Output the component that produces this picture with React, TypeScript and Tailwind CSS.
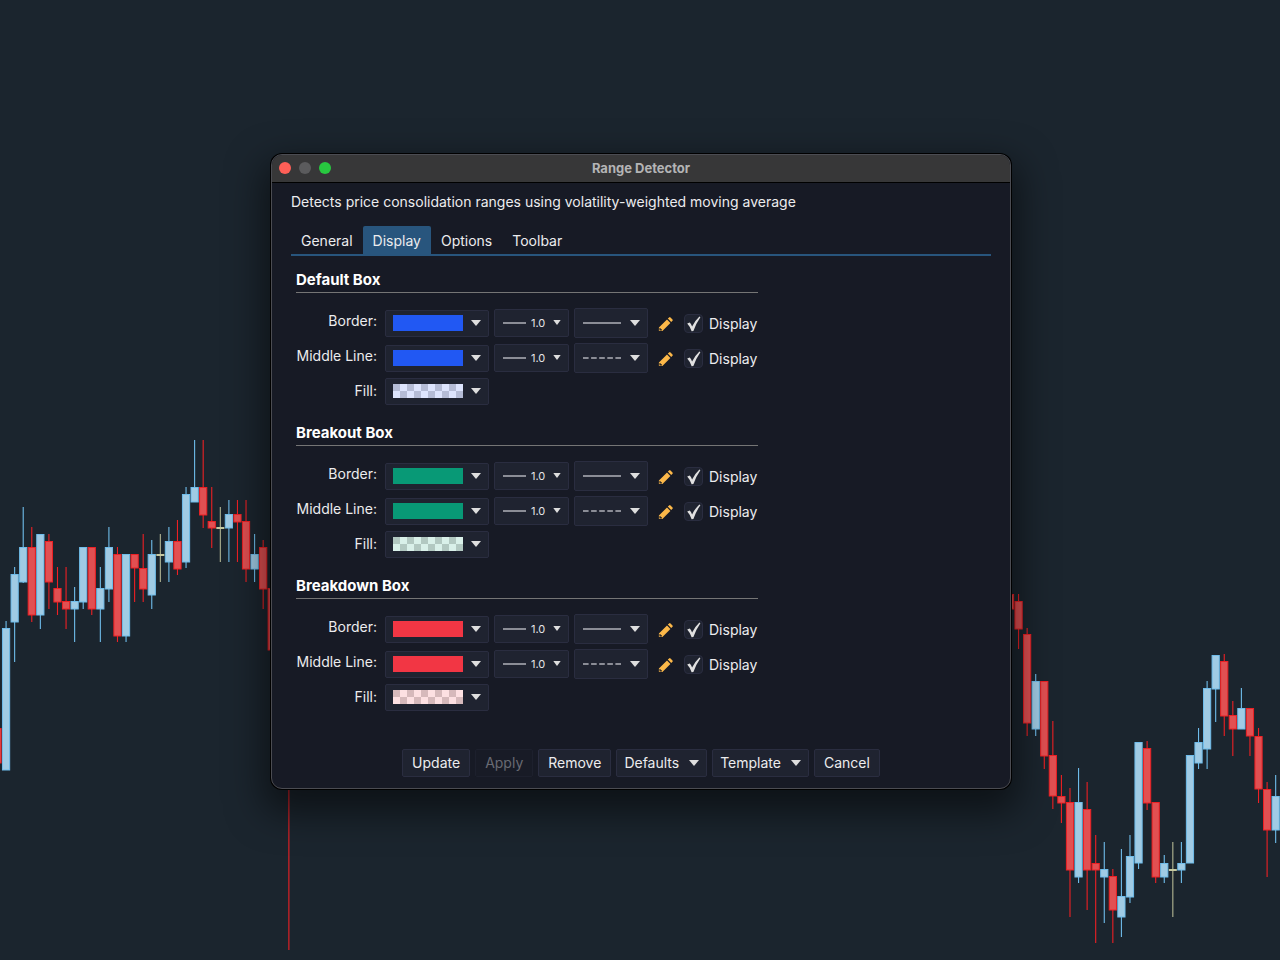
import { useId, useState, type ReactNode } from "react";

type Kind = "up" | "down" | "flat";
// [kind, high, body top, body bottom, low]
type Candle = [Kind, number, number, number, number];

const PITCH = 8.57;

const leftCandles: Candle[] = [
  ["down", 728, 728, 763, 763],
  ["up", 621, 628, 770, 770],
  ["up", 567, 574, 622, 662],
  ["up", 507, 547, 582, 583],
  ["down", 527, 547, 615, 622],
  ["up", 534, 534, 615, 629],
  ["down", 534, 541, 582, 609],
  ["down", 567, 588, 602, 615],
  ["down", 567, 601, 609, 629],
  ["up", 587, 601, 609, 642],
  ["up", 547, 547, 602, 609],
  ["down", 547, 547, 609, 615],
  ["up", 567, 588, 609, 642],
  ["up", 527, 547, 589, 602],
  ["down", 547, 554, 636, 642],
  ["up", 554, 554, 636, 642],
  ["down", 554, 554, 568, 602],
  ["down", 534, 568, 589, 602],
  ["up", 540, 554, 595, 609],
  ["flat", 534, 554, 556, 582],
  ["up", 527, 541, 562, 582],
  ["down", 520, 541, 569, 575],
  ["up", 487, 494, 562, 568],
  ["up", 440, 487, 502, 502],
  ["down", 440, 487, 515, 528],
  ["down", 487, 521, 528, 548],
  ["flat", 507, 527, 529, 562],
  ["up", 500, 514, 528, 562],
  ["down", 500, 514, 522, 562],
  ["down", 500, 521, 569, 582],
  ["up", 534, 554, 569, 582],
  ["down", 540, 547, 589, 609],
  ["down", 588, 588, 650, 650],
  ["down", 650, 650, 700, 720],
  ["down", 700, 700, 780, 950],
];

const rightCandles: Candle[] = [
  ["down", 594, 594, 609, 609],
  ["down", 594, 601, 629, 649],
  ["down", 628, 634, 723, 736],
  ["up", 674, 681, 729, 736],
  ["down", 681, 681, 756, 769],
  ["down", 721, 755, 796, 809],
  ["down", 775, 796, 803, 823],
  ["down", 788, 802, 870, 917],
  ["up", 768, 802, 877, 883],
  ["down", 782, 809, 870, 910],
  ["down", 835, 863, 870, 943],
  ["up", 842, 869, 877, 923],
  ["down", 869, 876, 910, 943],
  ["up", 849, 896, 917, 937],
  ["up", 835, 856, 897, 903],
  ["up", 742, 742, 863, 869],
  ["down", 741, 748, 803, 810],
  ["down", 802, 802, 877, 883],
  ["up", 855, 863, 877, 883],
  ["flat", 842, 869, 871, 917],
  ["up", 842, 863, 870, 883],
  ["up", 755, 755, 863, 863],
  ["up", 728, 742, 763, 769],
  ["up", 681, 688, 749, 769],
  ["up", 655, 655, 689, 722],
  ["down", 654, 661, 716, 736],
  ["down", 701, 715, 729, 756],
  ["up", 688, 708, 729, 729],
  ["down", 708, 708, 736, 756],
  ["down", 728, 736, 789, 803],
  ["down", 782, 789, 830, 877],
  ["up", 775, 796, 830, 843],
];

const candleColors: Record<Kind, { fill: string; line: string }> = {
  up: { fill: "#a0cbe4", line: "#6fbdeb" },
  down: { fill: "#e15052", line: "#ee2024" },
  flat: { fill: "#c5c8a0", line: "#b4b794" },
};

function CandleSeries({ candles, start }: { candles: Candle[]; start: number }) {
  return (
    <>
      {candles.map(([kind, high, top, bottom, low], i) => {
        const x = start + i * PITCH;
        const { fill, line } = candleColors[kind];
        return (
          <g key={i}>
            <line x1={x} x2={x} y1={high} y2={low} stroke={line} strokeWidth="1.1" />
            {kind === "flat" ? (
              <rect x={x - 4} y={top} width="8" height="2" fill={fill} />
            ) : (
              <rect x={x - 3.6} y={top + 0.5} width="7.2" height={bottom - top - 0.5} fill={fill} stroke={line} />
            )}
          </g>
        );
      })}
    </>
  );
}

function Chart() {
  return (
    <svg
      aria-hidden="true"
      viewBox="0 0 1280 960"
      preserveAspectRatio="xMidYMid slice"
      className="absolute inset-0 h-full w-full"
    >
      <CandleSeries candles={leftCandles} start={-2.5} />
      <CandleSeries candles={rightCandles} start={1010} />
    </svg>
  );
}

function Caret({ small = false }: { small?: boolean }) {
  return small ? (
    <svg aria-hidden="true" width="8" height="5" viewBox="0 0 8 5" className="shrink-0">
      <path d="M0.3 0H7.7L4 5Z" fill="#dedede" />
    </svg>
  ) : (
    <svg aria-hidden="true" width="10" height="6" viewBox="0 0 10 6" className="shrink-0">
      <path d="M0 0H10L5 6Z" fill="#dedede" />
    </svg>
  );
}

function Dropdown({
  label,
  options,
  className,
  children,
}: {
  label: string;
  options: string[];
  className: string;
  children: ReactNode;
}) {
  return (
    <div className="relative grid">
      <select
        aria-label={label}
        className={`appearance-none rounded-xs border border-[#2a2d40] bg-[#1f2330] outline-none ${className}`}
      >
        {options.map((option) => (
          <option key={option}>{option}</option>
        ))}
      </select>
      <div className="pointer-events-none absolute inset-0 flex items-center justify-between">{children}</div>
    </div>
  );
}

function ColorSelect({ label, name, swatch }: { label: string; name: string; swatch: string }) {
  return (
    <Dropdown label={label} options={[name]} className="h-[27px] w-[104px] text-transparent">
      <span className={`ml-2 w-[70px] ${swatch}`} />
      <span className="mr-2">
        <Caret />
      </span>
    </Dropdown>
  );
}

function WidthSelect({ label }: { label: string }) {
  return (
    <Dropdown
      label={label}
      options={["1.0", "1.5", "2.0", "3.0"]}
      className="h-7 w-[75px] pl-9 text-[11px] leading-4 text-[#e4e4e6]"
    >
      <span className="ml-[9px] h-0.5 w-[23px] bg-[#8b8d96]" />
      <span className="mr-2 flex">
        <Caret small />
      </span>
    </Dropdown>
  );
}

function StyleSelect({ label, dashed }: { label: string; dashed?: boolean }) {
  return (
    <Dropdown
      label={label}
      options={dashed ? ["Dashed", "Solid"] : ["Solid", "Dashed"]}
      className="h-[30px] w-[74px] text-transparent"
    >
      <svg aria-hidden="true" width="38" height="2" viewBox="0 0 38 2" className="ml-[9px]">
        <path d="M0 1H38" stroke="#8b8d96" strokeWidth="2" strokeDasharray={dashed ? "5.6 2.5" : undefined} />
      </svg>
      <span className="mr-2">
        <Caret />
      </span>
    </Dropdown>
  );
}

function PencilIcon() {
  return (
    <svg aria-hidden="true" width="16" height="16" viewBox="0 0 16 16">
      <path
        fill="#fcb849"
        d="M.9 15V11.4L9 3.5L12.4 6.9L4.4 15ZM9.8 2.6L11.1 1.4Q11.8 .8 12.5 1.4L14.5 3.4Q15.1 4.1 14.5 4.8L13.2 6.1Z"
      />
      <path d="M2 12V13.9H3.9" fill="none" stroke="#171a25" strokeWidth="1.1" />
    </svg>
  );
}

function DisplayCheck() {
  const id = useId();
  return (
    <div className="ml-[10px] flex items-center gap-1.5 pt-px">
      <span className="relative grid">
        <input
          id={id}
          type="checkbox"
          defaultChecked
          className="peer size-[19px] appearance-none rounded-sm border border-[#2a2d40] bg-[#1f2330]"
        />
        <svg
          aria-hidden="true"
          viewBox="0 0 19 19"
          className="pointer-events-none absolute inset-0 hidden size-full peer-checked:block"
        >
          <path d="M3.2 9.6L5.8 8.6Q7.2 10.3 8.1 12.4Q10.6 7 15.4 2.4L16.4 3.2Q12 9.4 9.4 17L7.6 17.2Q6 12.6 3.2 9.6Z" fill="#e0e0e0" />
        </svg>
      </span>
      <label htmlFor={id} className="pt-px leading-5">
        Display
      </label>
    </div>
  );
}

function LineRow({ label, section, color, swatch, dashed }: {
  label: string;
  section: string;
  color: string;
  swatch: string;
  dashed?: boolean;
}) {
  return (
    <div className="flex items-center">
      <span className="mr-2 w-[81px] pb-1 text-right leading-5 whitespace-nowrap">{label}:</span>
      <div className="flex items-center gap-[5px]">
        <div className="pt-px">
          <ColorSelect label={`${section} ${label} color`} name={color} swatch={`h-4 ${swatch}`} />
        </div>
        <WidthSelect label={`${section} ${label} width`} />
        <StyleSelect label={`${section} ${label} style`} dashed={dashed} />
      </div>
      <button type="button" aria-label={`Edit ${section} ${label}`} className="ml-[10px] pt-0.5">
        <PencilIcon />
      </button>
      <DisplayCheck />
    </div>
  );
}

function BoxSection({ title, color, solid, checker }: {
  title: string;
  color: string;
  solid: string;
  checker: string;
}) {
  return (
    <section>
      <h2 className="border-b border-[#757575] pb-0.5 text-[15px] leading-5 font-bold text-white">{title}</h2>
      <div className="mt-[15px] flex flex-col gap-[5px]">
        <LineRow label="Border" section={title} color={color} swatch={solid} />
        <LineRow label="Middle Line" section={title} color={color} swatch={solid} dashed />
        <div className="flex items-center">
          <span className="mr-2 w-[81px] text-right leading-5">Fill:</span>
          <ColorSelect label={`${title} Fill color`} name={color} swatch={`h-3.5 ${checker}`} />
        </div>
      </div>
    </section>
  );
}

const sections = [
  {
    title: "Default Box",
    color: "Blue",
    solid: "bg-[#2158f3]",
    checker: "bg-[repeating-conic-gradient(#dde4fd_0_25%,#b5bcd6_0_50%)] bg-size-[14px_14px]",
  },
  {
    title: "Breakout Box",
    color: "Green",
    solid: "bg-[#089976]",
    checker: "bg-[repeating-conic-gradient(#d9f0e9_0_25%,#b2c8c1_0_50%)] bg-size-[14px_14px]",
  },
  {
    title: "Breakdown Box",
    color: "Red",
    solid: "bg-[#f23644]",
    checker: "bg-[repeating-conic-gradient(#fde0e2_0_25%,#d6b9bb_0_50%)] bg-size-[14px_14px]",
  },
];

const tabs = ["General", "Display", "Options", "Toolbar"];

function ActionButton({ children, disabled, menu }: { children: string; disabled?: boolean; menu?: boolean }) {
  return (
    <button
      type="button"
      disabled={disabled}
      aria-haspopup={menu ? "menu" : undefined}
      className={`flex h-7 items-center gap-[10px] rounded-xs border border-[#2a2d40] bg-[#1f2330] leading-5 disabled:border-[#1d202d] disabled:bg-[#181b26] disabled:text-[#686a73] ${
        menu ? "px-[7px]" : "px-[9px]"
      }`}
    >
      {children}
      {menu && <Caret />}
    </button>
  );
}

export default function App() {
  const [active, setActive] = useState("Display");
  return (
    <main className="relative flex min-h-screen items-center justify-center overflow-hidden bg-[#1b252e] pb-[18px] pl-0.5 font-['Inter',sans-serif] text-sm text-[#ececee]">
      <Chart />
      <div
        role="dialog"
        aria-labelledby="dialog-title"
        className="relative w-full max-w-[740px] overflow-hidden rounded-[11px] border border-[#4b4c52] bg-[#171a25] shadow-[0_0_0_1px_#000,0_16px_36px_8px_rgba(0,0,0,0.5)]"
      >
        <header className="grid h-7 grid-cols-[1fr_auto_1fr] items-center border-b border-black bg-[#373738] px-[7px]">
          <div className="flex gap-2">
            <button type="button" aria-label="Close" className="size-3 rounded-full bg-[#ff5f57]" />
            <button type="button" aria-label="Minimize" disabled className="size-3 rounded-full bg-[#5b5b5d]" />
            <button type="button" aria-label="Zoom" className="size-3 rounded-full bg-[#28c840]" />
          </div>
          <h1 id="dialog-title" className="text-[13px] leading-4 font-bold text-[#b4b4b5]">
            Range Detector
          </h1>
        </header>

        <div className="px-[19px] pt-[9px] pb-[11px]">
          <p className="leading-5">Detects price consolidation ranges using volatility-weighted moving average</p>

          <div role="tablist" className="mt-[14px] flex border-b-2 border-[#28557d]">
            {tabs.map((tab) => (
              <button
                key={tab}
                type="button"
                role="tab"
                aria-selected={tab === active}
                onClick={() => setActive(tab)}
                className={`h-7 rounded-t-xs px-[10px] pt-0.5 leading-5 ${tab === active ? "bg-[#28557d]" : ""}`}
              >
                {tab}
              </button>
            ))}
          </div>

          <div className="mt-[14px] ml-[5px] flex max-w-[462px] flex-col gap-[18px]">
            {sections.map((section) => (
              <BoxSection key={section.title} {...section} />
            ))}
          </div>

          <footer className="mt-[38px] flex justify-center gap-[5px]">
            <ActionButton>Update</ActionButton>
            <ActionButton disabled>Apply</ActionButton>
            <ActionButton>Remove</ActionButton>
            <ActionButton menu>Defaults</ActionButton>
            <ActionButton menu>Template</ActionButton>
            <ActionButton>Cancel</ActionButton>
          </footer>
        </div>
      </div>
    </main>
  );
}
